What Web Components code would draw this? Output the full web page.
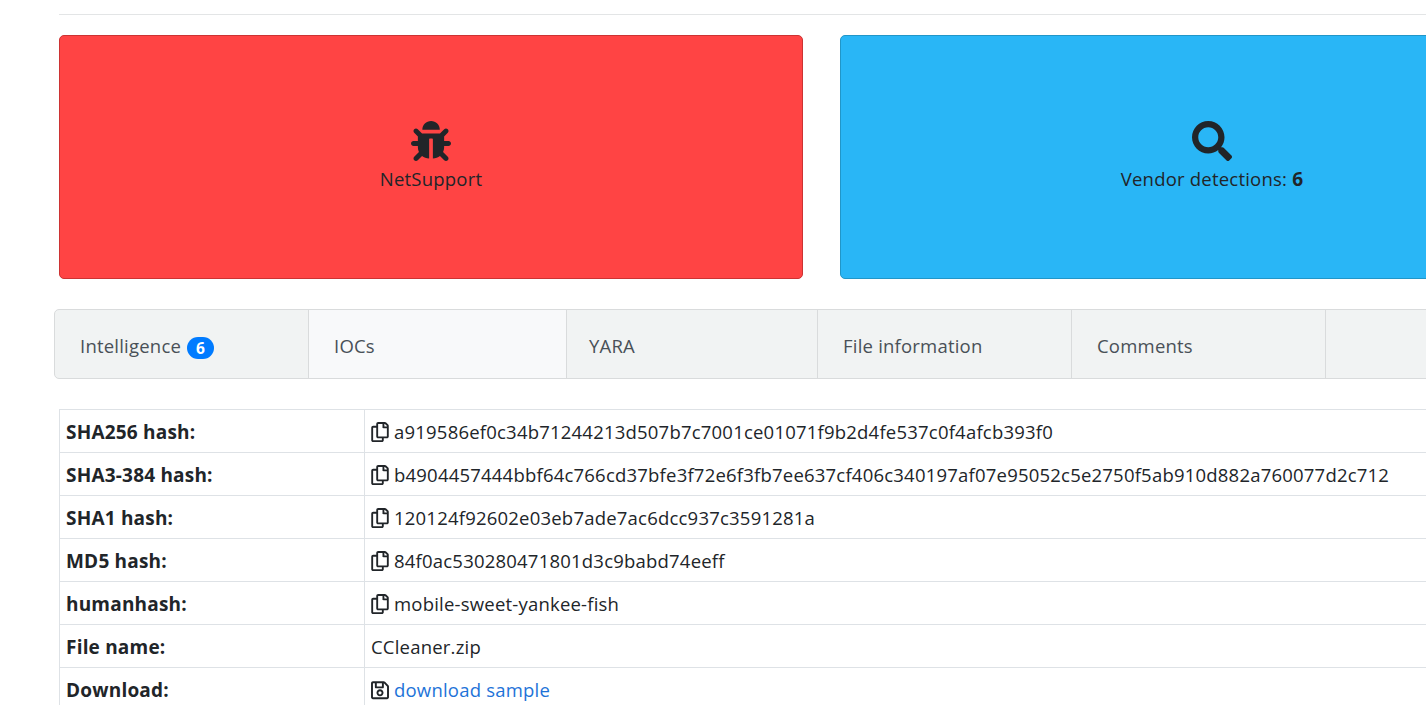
<!DOCTYPE html>
<html lang="en"><head><meta charset="utf-8"><title>Sample</title>
<style>
html,body{margin:0;height:705px;overflow:hidden;background:#fff}
body{font:18.5px/27px "Open Sans","Noto Sans",sans-serif;letter-spacing:.21px;color:#212529}
b{font-size:19px;line-height:1}
</style></head><body>
<sample-page>
  <sample-stat slot="stats" color="#ff4444" border="#c33">
    <svg slot="icon" width="40" height="40" viewBox="0 0 512 512"><path fill="currentColor" d="M511.988 288.9c-.478 17.43-15.217 31.1-32.653 31.1H424v16c0 21.864-4.882 42.584-13.6 61.145l60.228 60.228c12.496 12.497 12.496 32.758 0 45.255-12.498 12.497-32.759 12.496-45.256 0l-54.736-54.736C345.886 467.965 314.351 480 280 480V236c0-6.627-5.373-12-12-12h-24c-6.627 0-12 5.373-12 12v244c-34.351 0-65.886-12.035-90.636-32.108l-54.736 54.736c-12.498 12.497-32.759 12.496-45.256 0-12.496-12.497-12.496-32.758 0-45.255l60.228-60.228C92.882 378.584 88 357.864 88 336v-16H32.666C15.23 320 .491 306.33.013 288.9-.484 270.816 14.028 256 32 256h56v-58.745l-46.628-46.628c-12.496-12.497-12.496-32.758 0-45.255 12.498-12.497 32.758-12.497 45.256 0L141.255 160h229.489l54.627-54.627c12.498-12.497 32.758-12.497 45.256 0 12.496 12.497 12.496 32.758 0 45.255L424 197.255V256h56c17.972 0 32.484 14.816 31.988 32.9zM257 0c-61.856 0-112 50.144-112 112h224C369 50.144 318.856 0 257 0z"/></svg>
    NetSupport
  </sample-stat>
  <sample-stat slot="stats" color="#29b6f6" border="#2196c8">
    <svg slot="icon" width="40" height="40" viewBox="0 0 512 512"><path fill="currentColor" d="M505 442.7L405.3 343c-4.5-4.5-10.6-7-17-7H372c27.6-35.3 44-79.7 44-128C416 93.1 322.9 0 208 0S0 93.1 0 208s93.1 208 208 208c48.3 0 92.7-16.4 128-44v16.3c0 6.4 2.5 12.5 7 17l99.7 99.7c9.4 9.4 24.6 9.4 33.9 0l28.3-28.3c9.4-9.4 9.4-24.6.1-34zM208 336c-70.7 0-128-57.2-128-128 0-70.7 57.2-128 128-128 70.7 0 128 57.2 128 128 0 70.7-57.2 128-128 128z"/></svg>
    Vendor detections: <b>6</b>
  </sample-stat>
  <sample-tab slot="tabs" w="254">Intelligence <sample-badge>6</sample-badge></sample-tab>
  <sample-tab slot="tabs" w="258" light>IOCs</sample-tab>
  <sample-tab slot="tabs" w="251" pad="22">YARA</sample-tab>
  <sample-tab slot="tabs" w="254">File information</sample-tab>
  <sample-tab slot="tabs" w="254">Comments</sample-tab>
  <sample-tab slot="tabs" w="200"></sample-tab>
  <sample-row slot="rows" label="SHA256 hash:"><sample-copy></sample-copy>a919586ef0c34b71244213d507b7c7001ce01071f9b2d4fe537c0f4afcb393f0</sample-row>
  <sample-row slot="rows" label="SHA3-384 hash:"><sample-copy></sample-copy>b4904457444bbf64c766cd37bfe3f72e6f3fb7ee637cf406c340197af07e95052c5e2750f5ab910d882a760077d2c712</sample-row>
  <sample-row slot="rows" label="SHA1 hash:"><sample-copy></sample-copy>120124f92602e03eb7ade7ac6dcc937c3591281a</sample-row>
  <sample-row slot="rows" label="MD5 hash:"><sample-copy></sample-copy>84f0ac530280471801d3c9babd74eeff</sample-row>
  <sample-row slot="rows" label="humanhash:"><sample-copy></sample-copy>mobile-sweet-yankee-fish</sample-row>
  <sample-row slot="rows" label="File name:">CCleaner.zip</sample-row>
  <sample-row slot="rows" label="Download:"><svg width="18" height="20.5" viewBox="0 0 448 512" style="vertical-align:-3px;margin-right:5px"><path fill="currentColor" d="M433.941 129.941l-83.882-83.882A48 48 0 0 0 316.118 32H48C21.49 32 0 53.49 0 80v352c0 26.51 21.49 48 48 48h352c26.51 0 48-21.49 48-48V163.882a48 48 0 0 0-14.059-33.941zM272 80v80H144V80h128zm122 352H54a6 6 0 0 1-6-6V86a6 6 0 0 1 6-6h42v104c0 13.255 10.745 24 24 24h176c13.255 0 24-10.745 24-24V83.882l78.243 78.243a6 6 0 0 1 1.757 4.243V426a6 6 0 0 1-6 6zM224 232c-48.523 0-88 39.477-88 88s39.477 88 88 88 88-39.477 88-88-39.477-88-88-88zm0 128c-22.056 0-40-17.944-40-40s17.944-40 40-40 40 17.944 40 40-17.944 40-40 40z"/></svg><a href="#" style="color:#1e73d8;text-decoration:none">download sample</a></sample-row>
</sample-page>
<script>
function def(name, css, html, init){
  customElements.define(name, class extends HTMLElement{
    connectedCallback(){
      if(this.shadowRoot) return;
      const r=this.attachShadow({mode:'open'});
      r.innerHTML='<style>'+css+'</style>'+html;
      if(init) init(this,r);
    }
  });
}
def('sample-page',`
:host{display:block;width:1700px}
.top{margin:14px 0 0 59px;border-top:1px solid #e3e5e6;padding-top:20px}
.stats{display:flex;gap:37px}
.tabs{margin:30px 0 0 54px;display:flex;height:70px;box-sizing:border-box;border:1px solid #d9dbdc;border-radius:5px;background:#f1f3f3;overflow:hidden}
.rows{margin:30px 0 0 59px;border-top:1px solid #dee2e6;border-left:1px solid #dee2e6}
`,`<div class="top"><div class="stats"><slot name="stats"></slot></div></div>
<div class="tabs"><slot name="tabs"></slot></div>
<div class="rows"><slot name="rows"></slot></div>`);
def('sample-stat',`
:host{display:block;flex:0 0 744px;height:244px;box-sizing:border-box;border-radius:5px;border:1px solid var(--b);background:var(--c);color:#212529}
.in{height:100%;box-sizing:border-box;padding-bottom:1px;display:flex;flex-direction:column;align-items:center;justify-content:center;text-align:center}
.ic{height:40px;margin-bottom:4px}
`,`<div class="in"><div class="ic"><slot name="icon"></slot></div><div><slot></slot></div></div>`,
(h)=>{h.style.setProperty('--c',h.getAttribute('color'));h.style.setProperty('--b',h.getAttribute('border'));});
def('sample-tab',`
:host{display:block;flex:0 0 auto;box-sizing:border-box;padding-left:var(--p,25px);border-right:1px solid #d9dbdc;color:#495057;line-height:72px}
:host([light]){background:#f8f9fa}
`,`<slot></slot>`,(h)=>{h.style.width=h.getAttribute('w')+'px';if(h.hasAttribute('pad'))h.style.setProperty('--p',h.getAttribute('pad')+'px');});
def('sample-badge',`
:host{display:inline-block;box-sizing:border-box;min-width:27px;height:22px;margin-left:1px;padding:0 8px;border-radius:11px;background:#007bff;color:#fff;font-size:15.5px;line-height:22px;font-weight:700;text-align:center;vertical-align:-1px}
`,`<slot></slot>`);
def('sample-row',`
:host{display:flex;height:43px;box-sizing:border-box;border-bottom:1px solid #dee2e6;border-right:1px solid #dee2e6}
.k{flex:0 0 305px;box-sizing:border-box;padding:0 6px;border-right:1px solid #dee2e6;font-weight:700;font-size:19px;line-height:45px;letter-spacing:.2px}
.v{padding:0 6px;line-height:43px;white-space:nowrap}
`,`<div class="k"></div><div class="v"><slot></slot></div>`,(h,r)=>{r.querySelector('.k').textContent=h.getAttribute('label');});
def('sample-copy',`
:host{display:inline-block;margin-right:5px;vertical-align:-3px;line-height:0}
`,`<svg width="18" height="20" viewBox="0 0 448 512"><path fill="currentColor" d="M433.941 65.941l-51.882-51.882A48 48 0 0 0 348.118 0H176c-26.51 0-48 21.49-48 48v48H48c-26.51 0-48 21.49-48 48v320c0 26.51 21.49 48 48 48h224c26.51 0 48-21.49 48-48v-48h80c26.51 0 48-21.49 48-48V99.882a48 48 0 0 0-14.059-33.941zM266 464H54a6 6 0 0 1-6-6V150a6 6 0 0 1 6-6h74v224c0 26.51 21.49 48 48 48h96v42a6 6 0 0 1-6 6zm128-96H182a6 6 0 0 1-6-6V54a6 6 0 0 1 6-6h106v88c0 13.255 10.745 24 24 24h88v202a6 6 0 0 1-6 6zm6-256h-64V48h9.632c1.591 0 3.117.632 4.243 1.757l48.368 48.368a6 6 0 0 1 1.757 4.243V112z"/></svg>`);
</script>
</body></html>
